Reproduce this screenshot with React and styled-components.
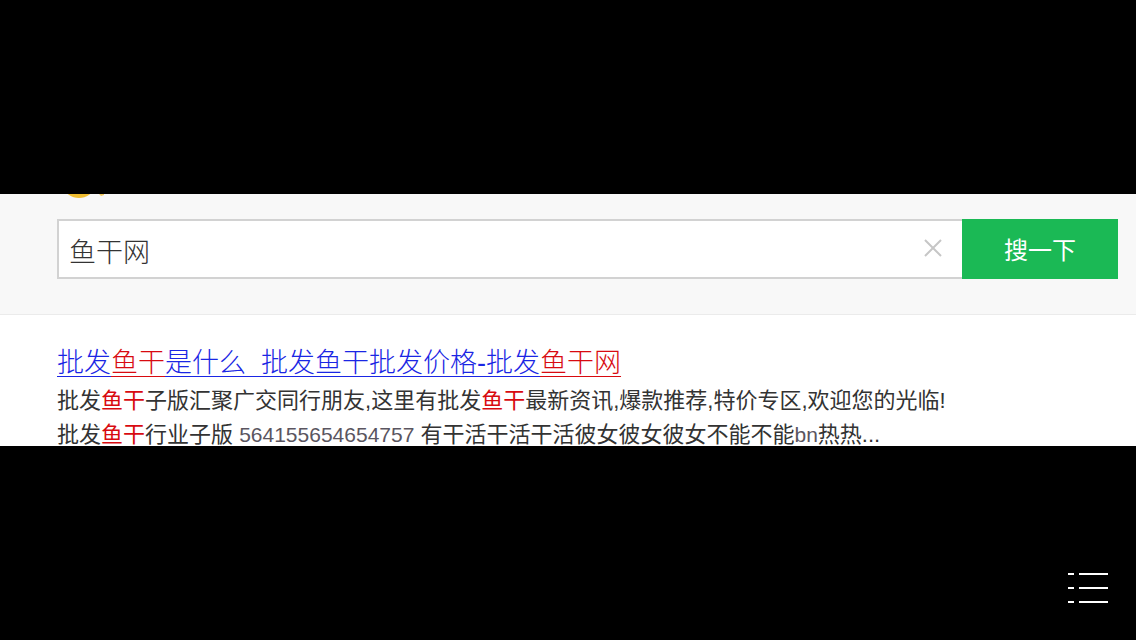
import React, { useState } from "react";
import styled, { createGlobalStyle } from "styled-components";

const GlobalStyle = createGlobalStyle`
  *, *::before, *::after { box-sizing: border-box; }
  body {
    margin: 0;
    background: #000;
    color: #333;
    font-family: "Liberation Sans", "Noto Sans CJK SC", sans-serif;
    font-weight: 300;
  }
`;

const Viewer = styled.div`
  display: flex;
  flex-direction: column;
  justify-content: center;
  min-height: 100vh;
`;

const Page = styled.main`
  background: #fff;
  overflow: hidden;
`;

const Header = styled.header`
  background: #f8f8f8;
  border-bottom: 1px solid #ebebeb;
  padding: 0 18px 35px 57px;
`;

const Logo = styled.svg`
  display: block;
  width: 60px;
  height: 25px;
`;

const SearchForm = styled.form`
  display: flex;
  height: 60px;
`;

const Field = styled.div`
  flex: 1;
  display: flex;
  align-items: center;
  min-width: 0;
  background: #fff;
  border: 2px solid #d2d2d2;
  border-right: 0;
`;

const SearchInput = styled.input`
  flex: 1;
  min-width: 0;
  height: 100%;
  border: 0;
  outline: 0;
  padding: 2px 0 0 10px;
  background: transparent;
  color: #333;
  font: inherit;
  font-size: 27px;
`;

const ClearButton = styled.button`
  display: flex;
  align-items: center;
  justify-content: center;
  width: 58px;
  height: 100%;
  padding: 0 0 2px;
  border: 0;
  background: transparent;
  cursor: pointer;
`;

const SubmitButton = styled.button`
  width: 156px;
  border: 0;
  padding: 0 0 2px;
  background: #1bb955;
  color: #fff;
  font: inherit;
  font-size: 24px;
  font-weight: 400;
  cursor: pointer;
`;

const Result = styled.article`
  padding: 27px 57px 0;
  height: 131px;
  overflow: hidden;
`;

const ResultTitle = styled.h2`
  margin: 0;
  font-size: 27px;
  font-weight: inherit;
  line-height: 42px;
  white-space: pre;
`;

const TitleLink = styled.a`
  color: #1a26e4;
  text-decoration: underline;
  text-decoration-thickness: 1px;
  text-underline-offset: 4px;
  text-decoration-skip-ink: none;
`;

const Keyword = styled.em`
  color: #d80a10;
  font-style: normal;
  ${TitleLink} & {
    text-decoration: underline;
    text-decoration-thickness: 1px;
    text-underline-offset: 4px;
    text-decoration-skip-ink: none;
  }
`;

const Summary = styled.p`
  margin: 0;
  font-size: 22px;
  font-weight: 400;
  line-height: 34px;
  white-space: nowrap;
`;

const Latin = styled.span`
  color: #5a5560;
  font-size: 21px;
`;

const MenuButton = styled.button`
  position: fixed;
  right: 28px;
  bottom: 36px;
  display: flex;
  padding: 0;
  border: 0;
  background: transparent;
  cursor: pointer;
`;

export default function App() {
  const [query, setQuery] = useState("鱼干网");
  return (
    <Viewer>
      <GlobalStyle />
      <Page>
        <Header>
          <Logo viewBox="0 0 60 25" aria-hidden="true">
            <ellipse cx="22" cy="-6" rx="14" ry="10" fill="#f0bd30" />
            <path d="M42 0h5v1l-3 1z" fill="#f3c95c" />
          </Logo>
          <SearchForm onSubmit={(e) => e.preventDefault()}>
            <Field>
              <SearchInput
                aria-label="搜索"
                value={query}
                onChange={(e) => setQuery(e.target.value)}
              />
              <ClearButton type="button" aria-label="清除" onClick={() => setQuery("")}>
                <svg width="18" height="18" viewBox="0 0 18 18">
                  <path d="M1 1l16 16M17 1L1 17" stroke="#c6c6c6" strokeWidth="2" />
                </svg>
              </ClearButton>
            </Field>
            <SubmitButton type="submit">搜一下</SubmitButton>
          </SearchForm>
        </Header>
        <Result>
          <ResultTitle>
            <TitleLink href="#result">
              批发<Keyword>鱼干</Keyword>是什么{"  "}批发鱼干批发价格-批发<Keyword>鱼干网</Keyword>
            </TitleLink>
          </ResultTitle>
          <Summary>
            批发<Keyword>鱼干</Keyword>子版汇聚广交同行朋友,这里有批发<Keyword>鱼干</Keyword>最新资讯,爆款推荐,特价专区,欢迎您的光临!
          </Summary>
          <Summary>
            批发<Keyword>鱼干</Keyword>行业子版 <Latin>564155654654757</Latin> 有干活干活干活彼女彼女彼女不能不能<Latin>bn</Latin>热热...
          </Summary>
        </Result>
      </Page>
      <MenuButton type="button" aria-label="菜单">
        <svg width="40" height="32" viewBox="0 0 40 32">
          <path d="M0 2h6M11 2h29M0 16h6M11 16h29M0 30h6M11 30h29" stroke="#fff" strokeWidth="2" />
        </svg>
      </MenuButton>
    </Viewer>
  );
}
